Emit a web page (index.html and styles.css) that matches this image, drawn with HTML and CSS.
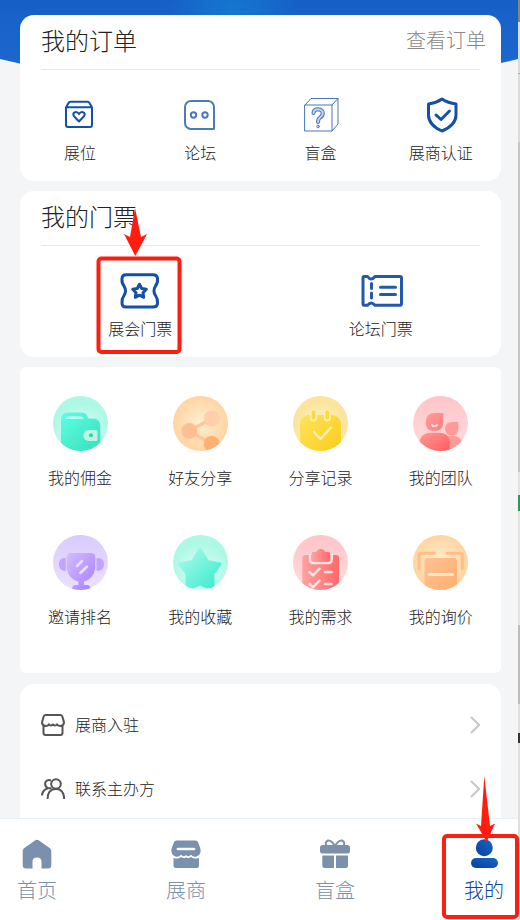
FILE: index.html
```html
<!DOCTYPE html>
<html lang="zh-CN">
<head>
<meta charset="utf-8">
<meta name="viewport" content="width=device-width, initial-scale=1">
<title>我的</title>
<link rel="stylesheet" href="styles.css">
</head>
<body>
<div class="app">
  <main class="content">
    <svg class="hero" viewBox="0 0 518 92" preserveAspectRatio="none" aria-hidden="true">
      <defs>
        <linearGradient id="heroFill" x1="0" y1="0" x2="0" y2="1">
          <stop offset="0" stop-color="#165fc6"/><stop offset="1" stop-color="#1e6bd2"/>
        </linearGradient>
        <radialGradient id="heroGlow" gradientUnits="userSpaceOnUse" cx="232" cy="10" r="65">
          <stop offset="0" stop-color="#1577d0"/><stop offset="1" stop-color="#1577d0" stop-opacity="0"/>
        </radialGradient>
      </defs>
      <path d="M0 0H518V59Q259 122 0 59Z" fill="url(#heroFill)"/>
      <path d="M0 0H518V59Q259 122 0 59Z" fill="url(#heroGlow)"/>
    </svg>

    <section class="card">
      <header class="card-head">
        <h2>我的订单</h2>
        <a class="more" href="#">查看订单</a>
      </header>
      <nav class="grid four lined">
        <a class="item" href="#">
          <svg class="line-icon" width="40" height="36" viewBox="0 0 40 36">
            <path d="M6 10.500V28a2 2 0 0 0 2 2H30a2 2 0 0 0 2-2V10.500L29.500 6Q29 4.800 27.500 4.800H10.500Q9 4.800 8.500 6ZM6 10.200H32"/>
            <path d="M19 24.500L14 19.300Q12.500 17 14.200 15.600Q17 13.900 19 17Q21 13.900 23.800 15.600Q25.500 17 24 19.300Z"/>
          </svg>
          <span>展位</span>
        </a>
        <a class="item" href="#">
          <svg class="line-icon soft" width="40" height="36" viewBox="0 0 40 36">
            <path d="M11 4H28a6 6 0 0 1 6 6V32H11a6 6 0 0 1-6-6V10a6 6 0 0 1 6-6Z"/>
            <circle cx="13.500" cy="18" r="2.700"/><circle cx="25" cy="18" r="2.700"/>
          </svg>
          <span>论坛</span>
        </a>
        <a class="item" href="#">
          <svg class="line-icon thin" width="40" height="36" viewBox="0 0 40 36">
            <path d="M4 8H31V34H4ZM4 8L10 1.500H37V27L31 34M31 8L37 1.500"/>
            <path class="mark" d="M12.500 16Q12.700 12.200 17 12.200Q21.800 12.400 21.800 16.500Q21.600 19 19 20.500Q17 22 17 25"/>
            <path class="mark-core" d="M12.500 16Q12.700 12.200 17 12.200Q21.800 12.400 21.800 16.500Q21.600 19 19 20.500Q17 22 17 25"/>
            <circle cx="17" cy="29.500" r="1.300"/>
          </svg>
          <span>盲盒</span>
        </a>
        <a class="item" href="#">
          <svg class="line-icon" width="40" height="36" viewBox="0 0 40 36">
            <path class="bold" d="M21 2Q27 6 35 7V18Q35 28 21 34Q7.500 28 7.500 18V7Q15 6 21 2Z"/>
            <path class="bold" d="M15 18L20 22.500L28.500 14"/>
          </svg>
          <span>展商认证</span>
        </a>
      </nav>
    </section>

    <section class="card">
      <header class="card-head"><h2>我的门票</h2></header>
      <nav class="grid two lined">
        <a class="item" href="#">
          <svg class="line-icon" width="44" height="36" viewBox="0 0 44 36">
            <path class="bold" d="M8 1.800H35Q39.500 1.800 39.500 6Q40 10 37.500 13Q34.500 18 37.500 22.500Q40 26 39.500 30Q39.500 34 35 34H8Q4 34 4 30Q3.500 26 6 22.500Q9 18 6 13Q3.500 10 4 6Q4 1.800 8 1.800Z"/>
            <path class="bold" d="M21.500 11.300L23.700 15.500L28.300 16.300L25 19.700L25.700 24.300L21.500 22.200L17.300 24.300L18 19.700L14.700 16.300L19.300 15.500Z"/>
          </svg>
          <span>展会门票</span>
          <svg class="callout callout-ticket" width="88" height="150" viewBox="0 0 88 150" aria-hidden="true">
            <rect x="2.500" y="51.500" width="81" height="93.500" rx="3"/>
            <path d="M39 1L45 30L51 27L39.300 49L28 27L34 30Z"/>
          </svg>
        </a>
        <a class="item" href="#">
          <svg class="line-icon medium" width="44" height="36" viewBox="0 0 44 36">
            <path d="M5 3.500H8.500Q12 8.500 16 3.500H41Q42.500 3.500 42.500 5V30.500Q42.500 32.300 41 32.300H16Q12 27.500 8.500 32.300H5Q4 32.300 4 30.500V5Q4 3.500 5 3.500ZM12.500 10.500V15.500M12.500 20V25M21.500 14.300H36.500M21.500 21.500H36.500"/>
          </svg>
          <span>论坛门票</span>
        </a>
      </nav>
    </section>

    <section class="card compact">
      <nav class="grid four badges">
        <a class="item" href="#">
          <svg width="55" height="55" viewBox="0 0 55 55">
            <defs>
              <clipPath id="disc"><circle cx="27.500" cy="27.500" r="27.500"/></clipPath>
              <radialGradient id="mintBg" cy="0.65"><stop offset="0" stop-color="#e2fff8"/><stop offset="1" stop-color="#aef8e6"/></radialGradient>
              <radialGradient id="orangeBg" cy="0.5"><stop offset="0" stop-color="#ffefd3"/><stop offset="1" stop-color="#ffd4a2"/></radialGradient>
              <radialGradient id="yellowBg" cy="0.6"><stop offset="0" stop-color="#fff6d0"/><stop offset="1" stop-color="#fbe49b"/></radialGradient>
              <linearGradient id="pinkBg" x2="0" y2="1"><stop offset="0" stop-color="#ffc5c8"/><stop offset="1" stop-color="#ffdcdd"/></linearGradient>
              <linearGradient id="violetBg" x2="0" y2="1"><stop offset="0" stop-color="#d9cbff"/><stop offset="1" stop-color="#ece1ff"/></linearGradient>
              <linearGradient id="mint" x2="1" y2="1"><stop offset="0" stop-color="#5dffe5"/><stop offset="1" stop-color="#38dfba"/></linearGradient>
              <linearGradient id="mintSoft" x2="1" y2="1"><stop offset="0.2" stop-color="#96f8e4"/><stop offset="0.900" stop-color="#45edcf"/></linearGradient>
              <linearGradient id="orange" x2="1" y2="1"><stop offset="0" stop-color="#ffc193"/><stop offset="1" stop-color="#ffad6c"/></linearGradient>
              <linearGradient id="yellow" x2="1" y2="1"><stop offset="0" stop-color="#ffe35e"/><stop offset="1" stop-color="#facb12"/></linearGradient>
              <linearGradient id="red" x2="1" y2="1"><stop offset="0" stop-color="#ff9c98"/><stop offset="1" stop-color="#ff5a5c"/></linearGradient>
              <linearGradient id="redSoft" x2="1" y2="1"><stop offset="0" stop-color="#ff9c98"/><stop offset="1" stop-color="#ff7f7f"/></linearGradient>
              <linearGradient id="board" x2="1" y2="0"><stop offset="0" stop-color="#ffa29f"/><stop offset="1" stop-color="#ff696a"/></linearGradient>
              <linearGradient id="violet" x2="1" y2="1"><stop offset="0" stop-color="#d2bdff"/><stop offset="1" stop-color="#a97eff"/></linearGradient>
            </defs>
            <g clip-path="url(#disc)">
              <rect width="55" height="55" fill="url(#mintBg)"/>
              <path d="M8 24Q8 16.500 15 16.500H29Q34 16.500 35 22.500H40Q47.300 22.500 47.300 30V55H8Z" fill="url(#mint)"/>
              <path d="M12 23Q13 20.300 16 20.300H27Q30 20.300 31 23Z" fill="#b8ffed"/>
              <path d="M36 34H43Q44.500 34 44.500 35.500V43.500Q44.500 45 43 45H36Q30.500 44.500 30.500 39.500Q30.500 34.500 36 34Z" fill="#baf8e5"/>
              <circle cx="38" cy="39.300" r="2" fill="#35cfad"/>
            </g>
          </svg>
          <span>我的佣金</span>
        </a>
        <a class="item" href="#">
          <svg width="55" height="55" viewBox="0 0 55 55">
            <g clip-path="url(#disc)">
              <rect width="55" height="55" fill="url(#orangeBg)"/>
              <path d="M38.700 22.500L16.300 35L38.700 48" stroke="#ffc59b" stroke-width="3.500" fill="none"/>
              <circle cx="16.300" cy="35" r="8" fill="#ffc091"/>
              <circle cx="38.700" cy="22.500" r="8" fill="#ffceaa"/>
              <circle cx="38.700" cy="48" r="8" fill="#ffb173"/>
            </g>
          </svg>
          <span>好友分享</span>
        </a>
        <a class="item" href="#">
          <svg width="55" height="55" viewBox="0 0 55 55">
            <g clip-path="url(#disc)">
              <rect width="55" height="55" fill="url(#yellowBg)"/>
              <rect x="7" y="19" width="41" height="44" rx="9" fill="url(#yellow)"/>
              <path d="M20.500 17.500V22M34.300 17.500V22" stroke="#fff1b3" stroke-width="7" stroke-linecap="round"/>
              <path d="M20.500 16.500V21.500M34.300 16.500V21.500" stroke="#fdda3c" stroke-width="4" stroke-linecap="round"/>
              <path d="M21 36L27.500 43L38 31.500" stroke="#fff1b3" stroke-width="2.500" stroke-linecap="round" stroke-linejoin="round" fill="none"/>
            </g>
          </svg>
          <span>分享记录</span>
        </a>
        <a class="item" href="#">
          <svg width="55" height="55" viewBox="0 0 55 55">
            <g clip-path="url(#disc)">
              <rect width="55" height="55" fill="url(#pinkBg)"/>
              <path d="M31 40H40Q46 40 50 46V55H31Z" fill="#ff9999"/>
              <path d="M45.300 26V33Q45 39.500 38.700 39.500Q32.500 39.500 32 33Q32.500 26 39 26Z" fill="#ff9a9a"/>
              <path d="M6 47Q8 36.700 17 36.700H27Q36.700 37 36.700 47V56H6Z" fill="url(#red)"/>
              <path d="M30.300 17V26.500Q30 35 21.500 35Q12.700 35 12.700 26.500Q12.700 17 22 17Z" fill="url(#redSoft)"/>
              <path d="M18.800 29Q21.500 31.500 24.200 29" fill="none" stroke="#ffe2e2" stroke-width="1.800" stroke-linecap="round"/>
            </g>
          </svg>
          <span>我的团队</span>
        </a>
        <a class="item" href="#">
          <svg width="55" height="55" viewBox="0 0 55 55">
            <g clip-path="url(#disc)">
              <rect width="55" height="55" fill="url(#violetBg)"/>
              <path d="M12.700 23Q6 22 6 29.500Q6 36 12.700 36ZM43.500 23Q51 22 51 29.500Q51 36 43.500 36Z" fill="#c0a2ff"/>
              <path d="M18 18H38Q42.300 18 42.300 22.500V33Q41 43.500 31 46.500V50H35Q37.500 50.500 37.500 55H19Q19 50.500 21.500 50H25.300V46.500Q15 43.500 13.700 33V22.500Q13.700 18 18 18Z" fill="url(#violet)"/>
              <path d="M24 31L29 26M27.300 38L34 31.500" stroke="#ecdfff" stroke-width="2.500" stroke-linecap="round"/>
            </g>
          </svg>
          <span>邀请排名</span>
        </a>
        <a class="item" href="#">
          <svg width="55" height="55" viewBox="0 0 55 55">
            <g clip-path="url(#disc)">
              <rect width="55" height="55" fill="url(#mintBg)"/>
              <path d="M27 14L34.500 26.500L47 29L40 38.500L40 52L27 51L14 52L14 38.500L6.500 29L19.500 26.500Z" fill="url(#mintSoft)" stroke="url(#mintSoft)" stroke-width="3" stroke-linejoin="round"/>
              <path d="M18 55L27 50.500L36 55Z" fill="#d6fff5"/>
            </g>
          </svg>
          <span>我的收藏</span>
        </a>
        <a class="item" href="#">
          <svg width="55" height="55" viewBox="0 0 55 55">
            <g clip-path="url(#disc)">
              <rect width="55" height="55" fill="url(#pinkBg)"/>
              <rect x="9.300" y="20" width="36.700" height="45" rx="3" fill="url(#board)"/>
              <path d="M17 19V24.500Q17 28 20.500 28H35Q38.700 28 38.700 24.500V19" fill="none" stroke="#ffe0e0" stroke-width="2.500"/>
              <path d="M20 17H23.500Q24.500 14 27.700 14Q31 14 32 17H35.500Q37 17 37 18.500V25Q37 26.700 35 26.700H20.500Q18.700 26.700 18.700 25V18.500Q18.700 17 20 17Z" fill="url(#board)"/>
              <path d="M16.500 37L20 40.300L26.500 33.700M32 37H38.500M16.500 49L20 52.300L26.500 45.700M32 49H38.500" stroke="#ffe2e2" stroke-width="2.500" stroke-linecap="round" stroke-linejoin="round" fill="none"/>
            </g>
          </svg>
          <span>我的需求</span>
        </a>
        <a class="item" href="#">
          <svg width="55" height="55" viewBox="0 0 55 55">
            <g clip-path="url(#disc)">
              <rect width="55" height="55" fill="url(#orangeBg)"/>
              <path d="M6 33.500V21Q6 18.300 8.500 18.300H21.500M34 18.300H47Q49.300 18.300 49.300 21V33.500" stroke="#ffbd87" stroke-width="3" stroke-linecap="round" fill="none"/>
              <rect x="11.500" y="23" width="32.500" height="40" rx="3" fill="url(#orange)"/>
              <path d="M16 39.500H39.500" stroke="#ffe9c9" stroke-width="3" stroke-linecap="round"/>
            </g>
          </svg>
          <span>我的询价</span>
        </a>
      </nav>
    </section>

    <section class="card list">
      <a class="row" href="#">
        <svg class="row-icon" width="24" height="22" viewBox="0 0 24 22">
          <path d="M4.500 1H19.500Q21 1 21.500 3L23 8.500Q22.500 12 19.500 12Q17 12 16 10.500Q14.500 12.500 12 10.500Q9.500 12.500 8 10.500Q7 12 4.500 12Q1.500 12 1 8.500L2.500 3Q3 1 4.500 1ZM2.500 12V19Q2.500 21 4.500 21H19.500Q21.500 21 21.500 19V12"/>
        </svg>
        <span>展商入驻</span>
        <svg class="chevron" width="10" height="18" viewBox="0 0 10 18"><path d="M1 1L9 9L1 17"/></svg>
      </a>
      <a class="row" href="#">
        <svg class="row-icon" width="24" height="22" viewBox="0 0 24 22">
          <circle cx="15" cy="6" r="4.800"/>
          <path d="M10 2.500Q6 1 4.300 4.500Q3.500 8.500 7 10.200H10.500M6.500 10.500Q1.500 12 1 17.500M6.500 21Q6.500 11.500 15 10.800Q23 11.500 23.200 21"/>
        </svg>
        <span>联系主办方</span>
        <svg class="chevron" width="10" height="18" viewBox="0 0 10 18"><path d="M1 1L9 9L1 17"/></svg>
      </a>
    </section>
  </main>

  <nav class="tabbar">
    <a class="tab" href="#">
      <svg width="30" height="30" viewBox="0 0 30 30" fill="currentColor">
        <path d="M13.300 1.200Q15 0.300 16.700 1.200L28 9.300Q29.300 10.300 29.300 12V26Q29.300 29.500 26 29.500H19.500V22.500Q19.500 18.500 15 18.500Q10.500 18.500 10.500 22.500V29.500H4Q0.700 29.500 0.700 26V12Q0.700 10.300 2 9.300Z"/>
      </svg>
      <span>首页</span>
    </a>
    <a class="tab" href="#">
      <svg width="30" height="30" viewBox="0 0 30 30" fill="currentColor">
        <path fill-rule="evenodd" d="M5.500 1.500H24.500Q26.500 1.500 27.200 3.500L29.500 10Q30.300 15.500 25.500 17.500Q22 18.300 20 15.700Q17.500 18.500 15 16Q12.500 18.500 10 15.700Q8 18.300 4.500 17.500Q-0.300 15.500 0.500 10L2.800 3.500Q3.500 1.500 5.500 1.500ZM7 8.700Q5.500 9 5.500 10Q5.500 11 7 11.300H23Q24.500 11 24.500 10Q24.500 9 23 8.700Z"/>
        <path d="M2.500 19Q7 20.500 10 18Q12.500 20 15 18.500Q17.500 20 20 18Q23 20.500 28 19V26.500Q28 29 26 29H4.500Q2.500 29 2.500 26.500Z"/>
      </svg>
      <span>展商</span>
    </a>
    <a class="tab" href="#">
      <svg width="30" height="30" viewBox="0 0 30 30" fill="currentColor">
        <path d="M15 7Q11.500 1 8 1.500Q4.500 3 6.500 7M15 7Q18.500 1 22 1.500Q25.500 3 23.500 7" fill="none" stroke="currentColor" stroke-width="2"/>
        <path d="M2.500 6H27.500Q30 6 30 9V12Q30 14.500 28 14.500H2Q0 14.500 0 12V9Q0 6 2.500 6ZM2.300 16.500H14V29H4.500Q2.300 29 2.300 27ZM16 16.500H28V27Q28 29 25.800 29H16Z"/>
      </svg>
      <span>盲盒</span>
    </a>
    <a class="tab active" href="#" aria-current="page">
      <svg width="30" height="30" viewBox="0 0 30 30">
        <defs><linearGradient id="userFill" x1="1" x2="0" y2="1"><stop offset="0" stop-color="#1a64c9"/><stop offset="1" stop-color="#06439d"/></linearGradient></defs>
        <circle cx="15.300" cy="8.700" r="8.500" fill="url(#userFill)"/>
        <rect x="2" y="19" width="27" height="10" rx="5" fill="url(#userFill)"/>
      </svg>
      <span>我的</span>
      <svg class="callout callout-tab" width="80" height="145" viewBox="0 0 80 145" aria-hidden="true">
        <rect x="4" y="61" width="73" height="81" rx="3"/>
        <path d="M44.300 1L50 51L55 48.500L46.700 67L36 48.500L41 51Z"/>
      </svg>
    </a>
  </nav>
</div>
</body>
</html>
```
FILE: styles.css
```css
* {
  box-sizing: border-box;
}

body {
  margin: 0;
  font-family: "Noto Sans CJK SC", "Liberation Sans", sans-serif;
  font-weight: 300;
  font-size: 16px;
  line-height: 24px;
  color: #222;
  background: linear-gradient(
    #858585 0 22px, #dcdcdc 22px 73px, #aaa 73px 74px, #dcdcdc 74px 142px,
    #c6c6c6 142px 472px, #e2e2e2 472px 495px, #21a044 495px 511px,
    #e2e2e2 511px 625px, #bdbdbd 625px 704px, #e0e0e0 704px 733px,
    #333 733px 743px, #e0e0e0 743px);
}

a {
  color: inherit;
  text-decoration: none;
}

svg {
  display: block;
}

.app {
  display: flex;
  flex-direction: column;
  height: 100vh;
  margin-right: 2px;
  background: #f4f5f7;
}

.content {
  position: relative;
  flex: 1;
  min-height: 0;
  padding: 15px 17px 0 20px;
  overflow-y: auto;
  scrollbar-width: none;
}

.hero {
  position: absolute;
  top: 0;
  left: 0;
  width: 100%;
  height: 92px;
}

.card {
  position: relative;
  margin-bottom: 10px;
  background: #fff;
  border-radius: 14px;
}

.card.compact {
  margin-bottom: 11px;
  border-radius: 6px;
}

.card-head {
  display: flex;
  align-items: center;
  justify-content: space-between;
  height: 55px;
  margin: 0 21px;
  padding-bottom: 4px;
  border-bottom: 1px solid #e8e8e8;
}

.card-head h2 {
  margin: 0;
  font-size: 24px;
  font-weight: 300;
  line-height: 32px;
}

.more {
  margin-right: -6px;
  font-size: 20px;
  color: #888;
}

.grid {
  display: grid;
}

.four {
  grid-template-columns: repeat(4, 1fr);
}

.two {
  grid-template-columns: repeat(2, 1fr);
}

.lined {
  padding: 27px 0 17px;
}

.badges {
  row-gap: 46px;
  padding: 29px 0 45px;
}

.item {
  position: relative;
  display: flex;
  flex-direction: column;
  align-items: center;
  gap: 7px;
}

.badges .item {
  gap: 14px;
}

.line-icon {
  fill: none;
  stroke: #1450a8;
  stroke-width: 2;
  stroke-linecap: round;
  stroke-linejoin: round;
}

.line-icon.soft {
  stroke: #4a7abf;
}

.line-icon.thin {
  stroke: #4777bd;
  stroke-width: 1;
}

.line-icon.medium,
.line-icon .bold {
  stroke-width: 3;
}

.line-icon.medium {
  stroke: #2259ad;
}

.line-icon .mark {
  stroke-width: 4;
}

.line-icon .mark-core {
  stroke: #c3d4ed;
  stroke-width: 2;
}

.row {
  display: flex;
  align-items: center;
  gap: 10px;
  height: 64px;
}

.row span {
  padding-bottom: 2px;
}

.list {
  padding: 9px 21px;
}

.row-icon {
  fill: none;
  stroke: #555;
  stroke-width: 2;
}

.chevron {
  margin-left: auto;
  fill: none;
  stroke: #c8c8c8;
  stroke-width: 2;
}

.tabbar {
  position: relative;
  display: flex;
  justify-content: space-between;
  padding: 20px 14px 18px 17px;
  background: #fff;
  border-top: 1px solid #e8f0f8;
}

.tab {
  position: relative;
  display: flex;
  flex-direction: column;
  align-items: center;
  gap: 9px;
  font-size: 20px;
  color: #7a90ac;
}

.tab.active {
  color: #0b479f;
}

.callout {
  position: absolute;
  pointer-events: none;
}

.callout rect {
  fill: none;
  stroke: #ff1d10;
  stroke-width: 4;
}

.callout path {
  fill: #ff1d10;
}

.callout-ticket {
  top: -66px;
  left: calc(50% - 44px);
}

.callout-tab {
  top: -64px;
  left: -24px;
}
```
